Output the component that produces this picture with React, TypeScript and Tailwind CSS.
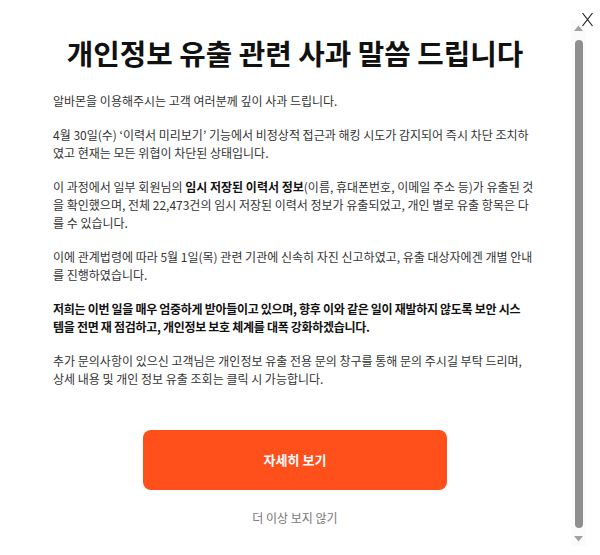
import React from "react";

export default function App() {
  const font = { fontFamily: '"Noto Sans CJK KR", "Noto Sans", sans-serif' };
  return (
    <div className="relative w-[600px] h-[555px] overflow-hidden bg-white" style={font}>
      <div className="pt-[20px]">
        <div className="h-[526px] w-[586px] overflow-hidden">
          <div className="pl-[53px] pr-[49px] pt-[15px] pb-[28px]">
            <h1 className="text-center text-[28.8px] leading-[36px] font-bold text-[#111111] whitespace-nowrap">
              개인정보 유출 관련 사과 말씀 드립니다
            </h1>
            <div className="mt-[21px] mr-[2px] flex flex-col gap-[16px] text-[12px] leading-[18px] text-[#333333]">
              <p>알바몬을 이용해주시는 고객 여러분께 깊이 사과 드립니다.</p>
              <p>
                4월 30일(수) ‘이력서 미리보기’ 기능에서 비정상적 접근과 해킹 시도가 감지되어 즉시 차단 조치하였고 현재는 모든 위협이 차단된 상태입니다.
              </p>
              <p>
                이 과정에서 일부 회원님의 <b className="font-bold text-[#111111]">임시 저장된 이력서 정보</b>(이름, 휴대폰번호, 이메일 주소 등)가 유출된 것을 확인했으며, 전체 22,473건의 임시 저장된 이력서 정보가 유출되었고, 개인 별로 유출 항목은 다를 수 있습니다.
              </p>
              <p>
                이에 관계법령에 따라 5월 1일(목) 관련 기관에 신속히 자진 신고하였고, 유출 대상자에겐 개별 안내를 진행하였습니다.
              </p>
              <p className="font-bold tracking-[-0.3px] text-[#111111]">
                저희는 이번 일을 매우 엄중하게 받아들이고 있으며, 향후 이와 같은 일이 재발하지 않도록 보안 시스
                <br />
                템을 전면 재 점검하고, 개인정보 보호 체계를 대폭 강화하겠습니다.
              </p>
              <p>
                추가 문의사항이 있으신 고객님은 개인정보 유출 전용 문의 창구를 통해 문의 주시길 부탁 드리며,
                <br />
                상세 내용 및 개인 정보 유출 조회는 클릭 시 가능합니다.
              </p>
            </div>
            <button className="mt-[42px] ml-[90px] flex h-[60px] w-[304px] items-center justify-center rounded-[8px] bg-[#ff501b] text-[13px] font-bold text-white">
              자세히 보기
            </button>
            <div className="mt-[19px] ml-[90px] w-[304px] text-center text-[12px] leading-[18px] text-[#777777]">
              더 이상 보지 않기
            </div>
          </div>
        </div>
      </div>

      {/* scrollbar */}
      <div className="absolute left-[571px] top-[20px] flex h-[526px] w-[15px] flex-col items-center bg-[#fbfbfb]">
        <div className="flex h-[15px] w-full items-center justify-center">
          <svg width="9" height="6" viewBox="0 0 9 6">
            <path d="M0 6 L4.5 0.5 L9 6 Z" fill="#a3a3a3" />
          </svg>
        </div>
        <div className="mt-[5px] h-[488px] w-[8px] rounded-full bg-[#8f8f8f]" />
        <div className="mt-auto flex h-[15px] w-full items-center justify-center">
          <svg width="9" height="6" viewBox="0 0 9 6">
            <path d="M0 0 L4.5 5.5 L9 0 Z" fill="#a3a3a3" />
          </svg>
        </div>
      </div>

      <button className="absolute right-[7px] top-[12px] h-[15px] w-[11px] text-[#222222]" aria-label="close">
        <svg viewBox="0 0 11 15" className="h-full w-full" fill="none" stroke="currentColor" strokeWidth="1.2">
          <path d="M0.5 1 L10.5 14 M10.5 1 L0.5 14" />
        </svg>
      </button>
    </div>
  );
}
